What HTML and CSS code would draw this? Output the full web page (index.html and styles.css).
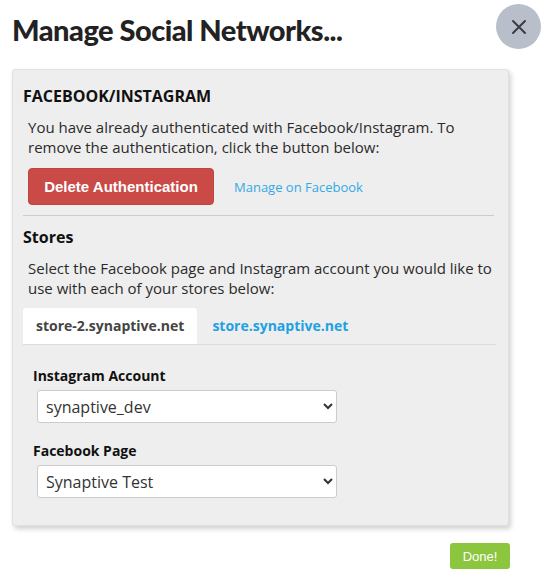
FILE: index.html
```html
<!DOCTYPE html>
<html lang="en">
<head>
    <meta charset="UTF-8">
    <meta name="viewport" content="width=device-width, initial-scale=1.0">
    <title>Manage Social Networks</title>
    <link rel="stylesheet" href="styles.css">
</head>
<body>
    <div class="modal">
        <div class="modal-head">
            <h1 class="title">Manage Social Networks...</h1>
            <button class="close" aria-label="Close">
                <svg width="16" height="16" viewBox="0 0 16 16"><path d="M2 2L14 14M14 2L2 14" stroke="#3a3d42" stroke-width="2" stroke-linecap="round"/></svg>
            </button>
        </div>
        <div class="panel">
            <h2 class="section-title caps">FACEBOOK/INSTAGRAM</h2>
            <p class="text">You have already authenticated with Facebook/Instagram. To remove the authentication, click the button below:</p>
            <div class="actions">
                <button class="btn-danger">Delete Authentication</button>
                <a class="link" href="#">Manage on Facebook</a>
            </div>
            <hr class="sep">
            <h2 class="section-title">Stores</h2>
            <p class="text">Select the Facebook page and Instagram account you would like to use with each of your stores below:</p>
            <div class="tabs">
                <div class="tab active">store-2.synaptive.net</div>
                <div class="tab">store.synaptive.net</div>
            </div>
            <div class="tab-body">
                <label class="field-label">Instagram Account</label>
                <div class="select-wrap">
                    <select class="select"><option>synaptive_dev</option></select>
                </div>
                <label class="field-label">Facebook Page</label>
                <div class="select-wrap">
                    <select class="select"><option>Synaptive Test</option></select>
                </div>
            </div>
        </div>
        <div class="modal-foot">
            <button class="btn-done">Done!</button>
        </div>
    </div>
</body>
</html>
```

FILE: styles.css
```css
*{
    margin:0;
    padding:0;
    box-sizing:border-box;
}
body{
    background:#fff;
    font-family:"Open Sans", "Liberation Sans", sans-serif;
    color:#333;
}
.modal{
    width:545px;
    padding:4px 4px 0 12px;
}
.modal-head{
    display:flex;
    justify-content:space-between;
    align-items:flex-start;
    height:65px;
}
.title{
    font-family:Lato, "Open Sans", sans-serif;
    font-weight:900;
    font-size:29px;
    line-height:36px;
    color:#222;
    margin-top:8px;
    letter-spacing:-0.5px;
}
.close{
    width:45px;
    height:45px;
    border-radius:50%;
    border:none;
    background:#b9bfca;
    display:flex;
    align-items:center;
    justify-content:center;
    cursor:pointer;
}
.panel{
    width:497px;
    background:#eeeeee;
    border:1px solid #e0e0e0;
    border-radius:3px;
    box-shadow:2px 3px 5px rgba(0,0,0,0.18);
    padding:15px 12px 27px 10px;
}
.section-title{
    font-size:16px;
    font-weight:700;
    color:#111;
    line-height:22px;
}
.text{
    font-size:15px;
    line-height:20px;
    color:#2b2b2b;
    margin:10px 0 0 5px;
}
.actions{
    display:flex;
    align-items:center;
    gap:20px;
    margin:11px 0 10px 5px;
}
.btn-danger{
    height:37px;
    width:186px;
    background:#c94a46;
    border:1px solid #c0443f;
    border-radius:4px;
    color:#fff;
    font-family:"Liberation Sans", Arial, sans-serif;
    font-weight:700;
    font-size:15px;
}
.link{
    font-size:13px;
    color:#33a9e6;
    text-decoration:none;
}
.sep{
    border:none;
    border-top:1px solid #ccc;
    margin:0 2px 10px 0;
}
.tabs{
    display:flex;
    margin-top:10px;
    border-bottom:1px solid #dcdcdc;
}
.tab{
    padding:7px 13px 8px;
    font-size:14px;
    font-weight:700;
    color:#1da1e3;
    line-height:21px;
}
.tab.active{
    background:#fff;
    color:#444;
    border-radius:3px 3px 0 0;
    margin-right:2px;
}
.tab-body{
    padding:21px 0 0 10px;
}
.field-label{
    display:block;
    font-size:14px;
    font-weight:700;
    color:#111;
    line-height:20px;
}
.select-wrap{
    margin:4px 0 18px 4px;
    width:300px;
}
.tab-body .select-wrap:last-child{
    margin-bottom:0;
}
.select{
    width:100%;
    height:33px;
    border:1px solid #ccc;
    border-radius:3px;
    background:#fff;
    font-family:"Open Sans", sans-serif;
    font-size:16px;
    color:#333;
    padding:0 4px;
}
.modal-foot{
    display:flex;
    justify-content:flex-end;
    padding:17px 31px 0 0;
}
.btn-done{
    width:60px;
    height:26px;
    background:#8cc63f;
    border:none;
    border-radius:3px;
    color:#fff;
    font-family:"Liberation Sans", Arial, sans-serif;
    font-size:13px;
}
```
